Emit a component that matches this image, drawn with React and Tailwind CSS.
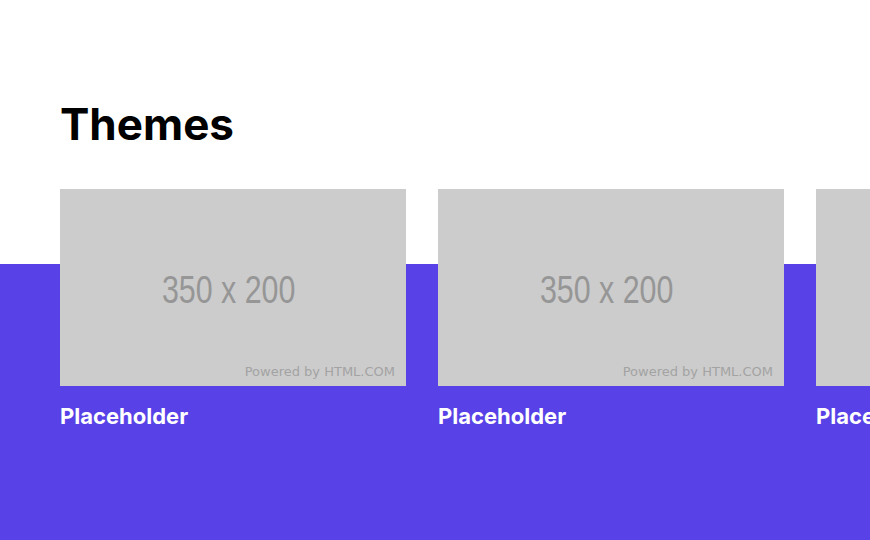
const themes = ['Placeholder', 'Placeholder', 'Placeholder']

function PlaceholderImage() {
  return (
    <div className="relative flex h-[197px] w-[346px] items-center justify-center bg-[#cccccc]">
      <span className="inline-block origin-center scale-x-[0.8] pr-[12px] pt-[4px] font-['Liberation_Sans',Arial,sans-serif] text-[38px] leading-none text-[#969696]">
        350 x 200
      </span>
      <span className="absolute bottom-[8px] right-[11px] font-['DejaVu_Sans',sans-serif] text-[13px] leading-none text-[#a3a3a3]">
        Powered by HTML.COM
      </span>
    </div>
  )
}

export default function App() {
  return (
    <div className="h-[540px] w-full overflow-hidden bg-[linear-gradient(to_bottom,#ffffff_264px,#5841e7_264px)] pl-[60px] pt-[102px]">
      <h1 className="font-['Inter',sans-serif] text-[44px] font-bold leading-none text-black">Themes</h1>

      {/* fila de cards, a terceira fica cortada na borda */}
      <div className="mt-[43px] flex gap-[32px]">
        {themes.map((nome, i) => (
          <div key={i} className="flex-shrink-0">
            <PlaceholderImage />
            <p className="mt-[16px] font-['Inter',sans-serif] text-[22px] font-bold leading-[28px] text-white">{nome}</p>
          </div>
        ))}
      </div>
    </div>
  )
}
